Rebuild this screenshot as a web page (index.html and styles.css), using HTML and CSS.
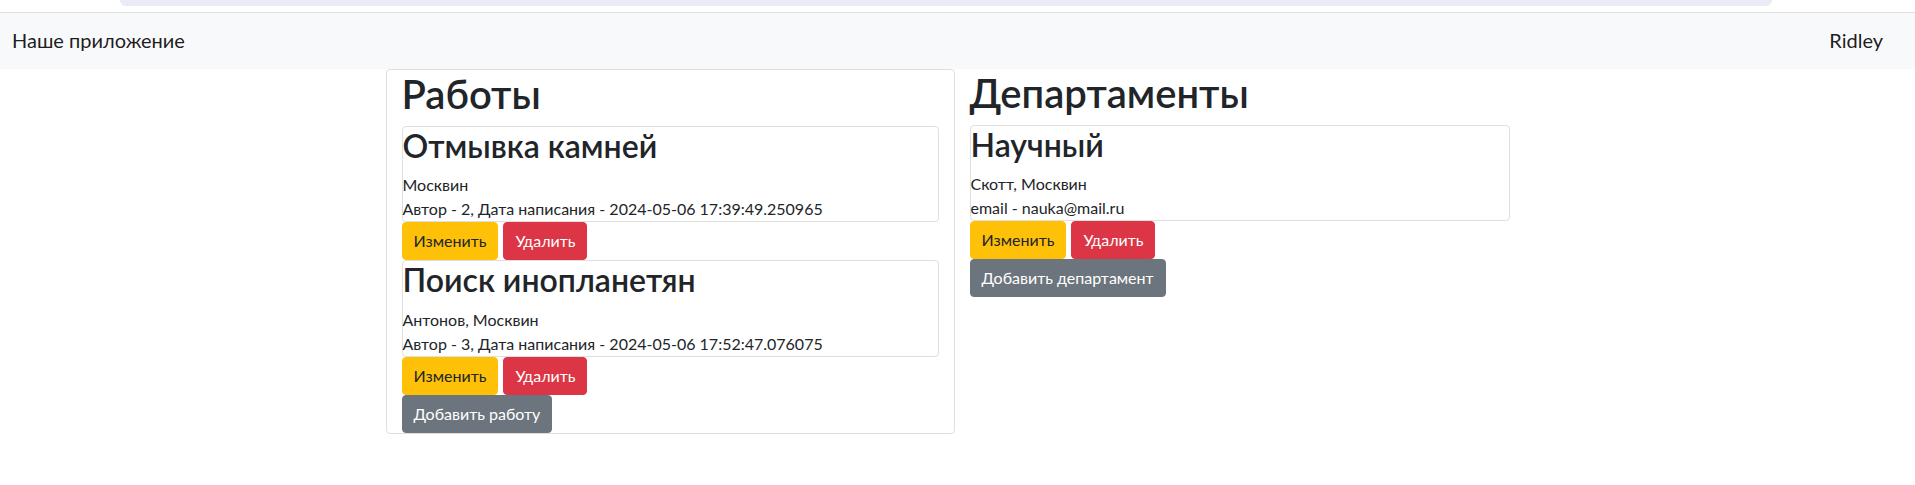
FILE: index.html
```html
<!DOCTYPE html>
<html lang="ru">
<head>
<meta charset="utf-8">
<title>Наше приложение</title>
<link rel="stylesheet" href="styles.css">
</head>
<body>
<div class="topstrip"><div class="topbar"></div></div>
<nav class="navbar">
  <a class="brand" href="#">Наше приложение</a>
  <a class="brand user" href="#">Ridley</a>
</nav>
<main class="main">
  <section class="col col-bordered">
    <h1>Работы</h1>
    <div class="item">
      <h2>Отмывка камней</h2>
      <div class="line">Москвин</div>
      <div class="line">Автор - 2, Дата написания - 2024-05-06 17:39:49.250965</div>
    </div>
    <div class="actions">
      <a class="btn btn-warning" href="#">Изменить</a>
      <button class="btn btn-danger">Удалить</button>
    </div>
    <div class="item">
      <h2>Поиск инопланетян</h2>
      <div class="line">Антонов, Москвин</div>
      <div class="line">Автор - 3, Дата написания - 2024-05-06 17:52:47.076075</div>
    </div>
    <div class="actions">
      <a class="btn btn-warning" href="#">Изменить</a>
      <button class="btn btn-danger">Удалить</button>
    </div>
    <div class="actions last">
      <a class="btn btn-secondary" href="#">Добавить работу</a>
    </div>
  </section>
  <section class="col col-plain">
    <h1>Департаменты</h1>
    <div class="item">
      <h2>Научный</h2>
      <div class="line">Скотт, Москвин</div>
      <div class="line">email - nauka@mail.ru</div>
    </div>
    <div class="actions">
      <a class="btn btn-warning" href="#">Изменить</a>
      <button class="btn btn-danger">Удалить</button>
    </div>
    <div class="actions last">
      <a class="btn btn-secondary" href="#">Добавить департамент</a>
    </div>
  </section>
</main>
</body>
</html>
```
FILE: styles.css
```css
* { box-sizing: border-box; }
html, body { margin: 0; padding: 0; }
body {
  font-family: "Lato", "Open Sans", sans-serif;
  font-size: 16px;
  line-height: 1.5;
  color: #212529;
  background: #fff;
}
.topstrip {
  height: 12px;
  background: #fff;
}
.topbar {
  margin-left: 120px;
  width: 1652px;
  height: 6px;
  background: #e9ebf6;
  border-radius: 0 0 12px 12px;
}
.navbar {
  height: 57px;
  border-top: 1px solid #dde1da;
  background: #f8f9fa;
  display: flex;
  align-items: center;
  justify-content: space-between;
  padding: 0 32px 0 12px;
}
.brand {
  font-size: 20px;
  line-height: 30px;
  color: rgba(0,0,0,.9);
  text-decoration: none;
  padding-bottom: 3px;
}
.main {
  width: 1144px;
  margin: 0 auto;
  display: grid;
  grid-template-columns: 569px 1fr;
}
.col-bordered {
  border: 1px solid rgba(0,0,0,.125);
  border-radius: 4px;
  padding: 0 15px;
  align-self: start;
}
.col-plain {
  padding: 0 20px 0 15px;
}
h1 {
  font-size: 40px;
  font-weight: 600;
  line-height: 1.2;
  margin: 0 0 8px;
}
h2 {
  font-size: 32px;
  font-weight: 600;
  line-height: 1.2;
  margin: 0 0 8px;
}
.item {
  border: 1px solid rgba(0,0,0,.125);
  border-radius: 4px;
}
.line {
  line-height: 24px;
}
.actions {
  display: flex;
  gap: 5px;
}
.btn {
  display: inline-block;
  font-family: inherit;
  font-size: 16px;
  line-height: 24px;
  padding: 6px 11px;
  border: 1px solid transparent;
  border-radius: 4px;
  text-decoration: none;
  cursor: pointer;
}
.btn-warning { background: #ffc107; border-color: #ffc107; color: #212529; }
.btn-danger { background: #dc3545; border-color: #dc3545; color: #fff; }
.btn-secondary { background: #6c757d; border-color: #6c757d; color: #fff; }
```
